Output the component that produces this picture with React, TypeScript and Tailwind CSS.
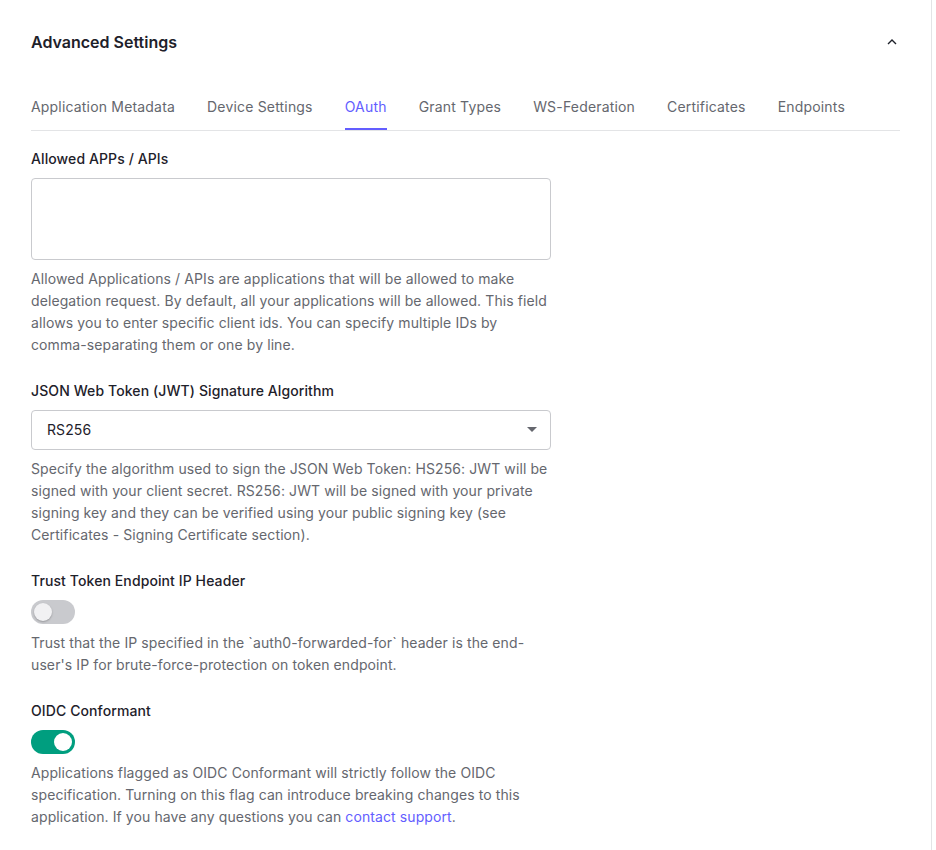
import React from "react";

const tabs = [
  "Application Metadata",
  "Device Settings",
  "OAuth",
  "Grant Types",
  "WS-Federation",
  "Certificates",
  "Endpoints",
];

const Toggle: React.FC<{ on?: boolean }> = ({ on }) => (
  <div
    className={
      on
        ? "flex items-center justify-end w-[44px] h-[24px] rounded-full bg-[#009e7f] px-[3px]"
        : "flex items-center justify-start w-[44px] h-[24px] rounded-full bg-[#c9cace] px-[3px]"
    }
  >
    <div
      className={
        on
          ? "w-[18px] h-[18px] rounded-full bg-white"
          : "w-[18px] h-[18px] rounded-full bg-[#f1f1f3] shadow-[0_1px_2px_rgba(0,0,0,0.25)]"
      }
    />
  </div>
);

const Label: React.FC<{ children: React.ReactNode }> = ({ children }) => (
  <div className="text-sm leading-5 font-medium tracking-[0.1px] text-[#1e212a]">
    {children}
  </div>
);

const Help: React.FC<{ children: React.ReactNode }> = ({ children }) => (
  <p className="mt-[8px] text-sm leading-[22px] tracking-[0.1px] text-[#65676e]">
    {children}
  </p>
);

export default function App() {
  return (
    <div
      className="w-[932px] min-h-[850px] bg-white border-r border-[#e3e4e6]"
      style={{ fontFamily: "Inter, 'Noto Sans', sans-serif" }}
    >
      <div className="px-[31px] pt-[30px]">
        <div className="flex items-center justify-between">
          <h2 className="text-base leading-6 font-semibold text-[#1e212a]">
            Advanced Settings
          </h2>
          <svg width="12" height="8" viewBox="0 0 12 8" className="mr-[2px]">
            <polyline
              points="2,6 6,2 10,6"
              fill="none"
              stroke="#1e212a"
              strokeWidth="1.4"
            />
          </svg>
        </div>

        <div className="mt-[43px] flex gap-8 border-b border-[#e3e4e6]">
          {tabs.map((t) => (
            <div
              key={t}
              className={
                t === "OAuth"
                  ? "pb-[11px] border-b-2 border-[#635dff] text-sm leading-5 tracking-[0.18px] text-[#635dff]"
                  : "pb-[11px] border-b-2 border-transparent text-sm leading-5 tracking-[0.18px] text-[#65676e]"
              }
            >
              {t}
            </div>
          ))}
        </div>

        <div className="w-[520px] pt-[18px] pb-10">
          <Label>Allowed APPs / APIs</Label>
          <textarea className="mt-[9px] block w-full h-[82px] rounded border border-[#c9cace] resize-none outline-none" />
          <Help>
            Allowed Applications / APIs are applications that will be allowed to make
            delegation request. By default, all your applications will be allowed. This
            field allows you to enter specific client ids. You can specify multiple IDs by{" "}
            <span className="whitespace-nowrap">comma-separating</span> them or one by line.
          </Help>

          <div className="mt-[25px]">
            <Label>JSON Web Token (JWT) Signature Algorithm</Label>
          </div>
          <div className="mt-[9px] flex items-center justify-between h-[40px] rounded border border-[#c9cace] pl-[15px] pr-[13px]">
            <span className="text-sm tracking-[0.1px] text-[#1e212a]">RS256</span>
            <svg width="10" height="6" viewBox="0 0 10 6">
              <polygon points="0,0 10,0 5,5" fill="#65676e" />
            </svg>
          </div>
          <Help>
            Specify the algorithm used to sign the JSON Web Token: HS256: JWT will be
            signed with your client secret. RS256: JWT will be signed with your private
            signing key and they can be verified using your public signing key (see
            Certificates - Signing Certificate section).
          </Help>

          <div className="mt-[25px]">
            <Label>Trust Token Endpoint IP Header</Label>
          </div>
          <div className="mt-[9px]">
            <Toggle />
          </div>
          <Help>
            Trust that the IP specified in the `auth0-forwarded-for` header is the
            end-user's IP for brute-force-protection on token endpoint.
          </Help>

          <div className="mt-[25px]">
            <Label>OIDC Conformant</Label>
          </div>
          <div className="mt-[9px]">
            <Toggle on />
          </div>
          <Help>
            Applications flagged as OIDC Conformant will strictly follow the OIDC
            specification. Turning on this flag can introduce breaking changes to this
            application. If you have any questions you can{" "}
            <span className="text-[#635dff]">contact support</span>.
          </Help>
        </div>
      </div>
    </div>
  );
}
